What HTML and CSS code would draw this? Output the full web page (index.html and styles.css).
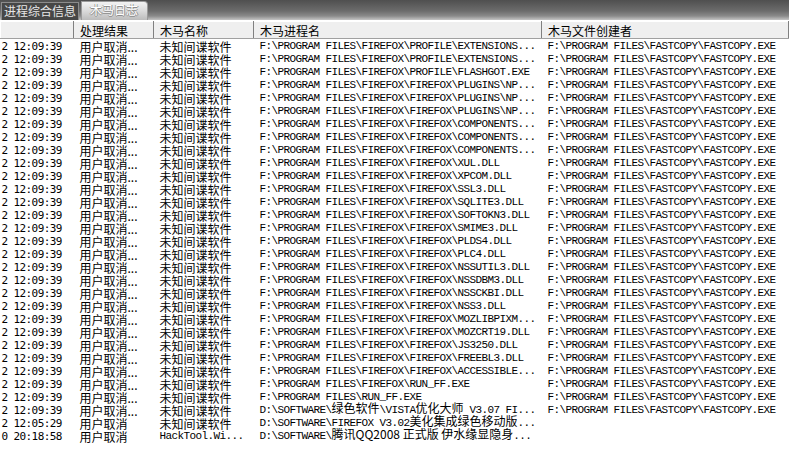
FILE: index.html
```html
<!DOCTYPE html>
<html lang="zh-CN">

<head>
    <meta charset="UTF-8">
    <title>木马日志</title>
    <link rel="stylesheet" href="styles.css">
</head>

<body>
    <header class="tabbar">
        <span class="tab">进程综合信息</span>
        <span class="tab active">木马日志</span>
    </header>
    <main class="log">
        <table class="grid">
            <colgroup>
                <col class="c-time">
                <col class="c-result">
                <col class="c-name">
                <col class="c-proc">
                <col class="c-owner">
            </colgroup>
            <thead>
                <tr>
                    <th></th>
                    <th>处理结果</th>
                    <th>木马名称</th>
                    <th>木马进程名</th>
                    <th>木马文件创建者</th>
                </tr>
            </thead>
            <tbody id="rows"></tbody>
        </table>
    </main>
    <script>
        let d = document;
        let fc = "F:\\PROGRAM FILES\\FASTCOPY\\FASTCOPY.EXE";
        let ff = "F:\\PROGRAM FILES\\FIREFOX\\FIREFOX\\";
        let procs = [
            "F:\\PROGRAM FILES\\FIREFOX\\PROFILE\\EXTENSIONS...",
            "F:\\PROGRAM FILES\\FIREFOX\\PROFILE\\EXTENSIONS...",
            "F:\\PROGRAM FILES\\FIREFOX\\PROFILE\\FLASHGOT.EXE",
            ff + "PLUGINS\\NP...",
            ff + "PLUGINS\\NP...",
            ff + "PLUGINS\\NP...",
            ff + "COMPONENTS...",
            ff + "COMPONENTS...",
            ff + "COMPONENTS...",
            ff + "XUL.DLL",
            ff + "XPCOM.DLL",
            ff + "SSL3.DLL",
            ff + "SQLITE3.DLL",
            ff + "SOFTOKN3.DLL",
            ff + "SMIME3.DLL",
            ff + "PLDS4.DLL",
            ff + "PLC4.DLL",
            ff + "NSSUTIL3.DLL",
            ff + "NSSDBM3.DLL",
            ff + "NSSCKBI.DLL",
            ff + "NSS3.DLL",
            ff + "MOZLIBPIXM...",
            ff + "MOZCRT19.DLL",
            ff + "JS3250.DLL",
            ff + "FREEBL3.DLL",
            ff + "ACCESSIBLE...",
            "F:\\PROGRAM FILES\\FIREFOX\\RUN_FF.EXE",
            "F:\\PROGRAM FILES\\RUN_FF.EXE",
            "D:\\SOFTWARE\\<span class='cjk'>绿色软件</span>\\VISTA<span class='cjk'>优化大师</span> V3.07 FI..."
        ];
        let html = procs.map(p => `<tr><td class="time">2 12:09:39</td><td>用户取消...</td><td>未知间谍软件</td><td class="path">${p}</td><td class="path">${fc}</td></tr>`).join("");
        html += `<tr><td class="time">2 12:05:29</td><td>用户取消</td><td>未知间谍软件</td><td class="path">D:\\SOFTWARE\\FIREFOX V3.02<span class="cjk">美化集成绿色移动版</span>...</td><td></td></tr>`;
        html += `<tr><td class="time">0 20:18:58</td><td>用户取消</td><td class="path">HackTool.Wi...</td><td class="path">D:\\SOFTWARE\\<span class="cjk">腾讯QQ2008 正式版 伊水缘显隐身</span>...</td><td></td></tr>`;
        d.querySelector("#rows").innerHTML = html;
    </script>
</body>

</html>
```

FILE: styles.css
```css
html {
    box-sizing: border-box;
    font-family: "Noto Sans CJK SC", sans-serif;
    font-size: 12px;
}

*,
*::before,
*::after {
    box-sizing: inherit;
}

body {
    margin: 0;
    width: 789px;
    height: 450px;
    overflow: hidden;
    background-color: #fff;
}

.tabbar {
    height: 20px;
    display: flex;
    align-items: flex-end;
    gap: 2px;
    padding-left: 1px;
    background: linear-gradient(#4f4f4f, #6c6c6c 55%, #8a8a8a 80%, #c4c4c4);
}

.tab {
    height: 18px;
    line-height: 16px;
    padding: 0 2px;
    color: #e6e6e6;
    background-color: #474747;
    border: 1px solid #8c8c8c;
    border-bottom: none;
}

.tab.active {
    height: 19px;
    padding: 0 9px 0 8px;
    color: #fff;
    text-shadow: 1px 0 #8c8c8c, -1px 0 #a0a0a0, 0 1px #8c8c8c;
    background: linear-gradient(#f2f2f2, #dadada 50%, #bcbcbc);
    border-color: #9a9a9a;
    border-top-right-radius: 4px;
}

.log {
    padding-top: 1px;
}

.grid {
    width: 789px;
    table-layout: fixed;
    border-collapse: collapse;
}

.c-time { width: 73px; }
.c-result { width: 80px; }
.c-name { width: 100px; }
.c-proc { width: 288px; }

.grid th {
    height: 17px;
    padding: 0 0 0 6px;
    font-weight: normal;
    text-align: left;
    line-height: 15px;
    background-color: #efefef;
    border-top: 1px solid #fff;
    border-bottom: 1px solid #a0a0a0;
    border-left: 1px solid #fff;
    border-right: 1px solid #808080;
    white-space: nowrap;
}

.grid td {
    height: 13px;
    padding: 0 0 0 6px;
    line-height: 13px;
    white-space: nowrap;
    color: #000;
}

.grid tbody tr:first-child td {
    padding-top: 1px;
    height: 14px;
}

.grid td.time {
    padding-left: 1px;
    font-family: "DejaVu Sans Mono", monospace;
    font-size: 11px;
    letter-spacing: -0.6px;
}

.grid td.path {
    font-family: "Liberation Mono", monospace;
    font-size: 11px;
    letter-spacing: -0.6px;
}

.cjk {
    font-family: "Noto Sans CJK SC", sans-serif;
    font-size: 12px;
    line-height: 0;
    letter-spacing: 0;
}
```
